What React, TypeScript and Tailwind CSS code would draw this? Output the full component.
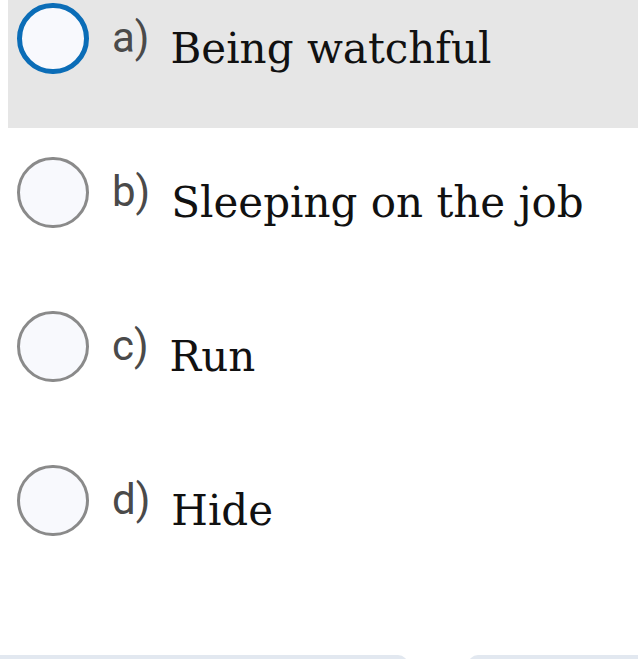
import React from "react";

const OPTIONS = [
  { key: "a)", text: "Being watchful", selected: true },
  { key: "b)", text: "Sleeping on the job", selected: false },
  { key: "c)", text: "Run", selected: false },
  { key: "d)", text: "Hide", selected: false },
];

function Option({ label, text, selected }: { label: string; text: string; selected: boolean }) {
  return (
    <div
      className={`flex items-start h-[128px] pl-[9px] ${selected ? "bg-[#e6e6e6]" : "bg-white"}`}
    >
      {/* radio */}
      <div
        className={`mt-[3px] w-[72px] h-[71px] shrink-0 rounded-full bg-[#f8f9fd] ${
          selected ? "border-[5px] border-[#0b6db7]" : "border-[3px] border-[#8a8a8a]"
        }`}
      ></div>
      <span className="ml-[23px] mt-[17px] text-[42px] leading-none text-[#4a4a4a] font-['Roboto',sans-serif]">
        {label}
      </span>
      <span className="ml-[21px] mt-[28px] text-[42px] leading-none text-[#111] font-['DejaVu_Serif',serif]">
        {text}
      </span>
    </div>
  );
}

export default function App() {
  return (
    <div className="h-[659px] w-[638px] overflow-hidden bg-white flex flex-col">
      <div className="pl-[8px] flex flex-col gap-[26px]">
        {OPTIONS.map((o) => (
          <Option key={o.key} label={o.key} text={o.text} selected={o.selected} />
        ))}
      </div>

      {/* bottom buttons peeking in */}
      <div className="mt-auto flex justify-between h-[4px]">
        <div className="w-[408px] h-[20px] bg-[#e2e8f0] rounded-tr-[10px]"></div>
        <div className="w-[170px] h-[20px] bg-[#e2e8f0] rounded-tl-[10px]"></div>
      </div>
    </div>
  );
}
